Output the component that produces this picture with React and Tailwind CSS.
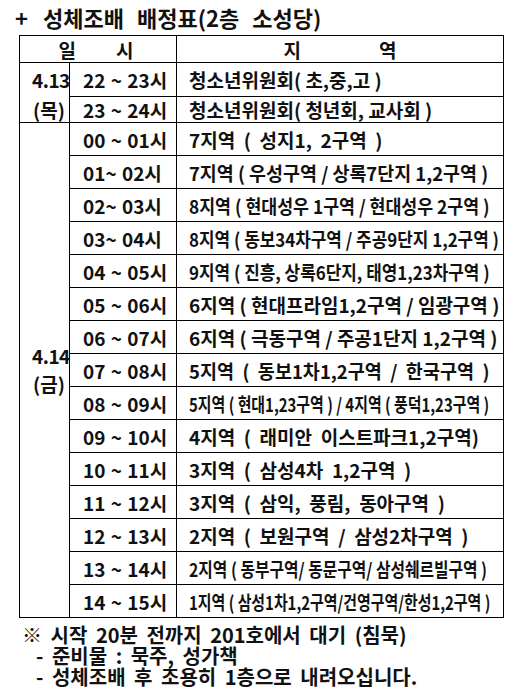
import React from "react";

// rows squeezed horizontally (장평) in the original get a scale-x class
const rows = [
  { time: "00 ~ 01시", area: "7지역  (  성지1,  2구역  )", cls: "" },
  { time: "01~ 02시", area: "7지역 ( 우성구역 / 상록7단지 1,2구역 )", cls: "scale-x-[0.97]" },
  { time: "02~ 03시", area: "8지역 ( 현대성우 1구역 / 현대성우 2구역 )", cls: "scale-x-[0.91]" },
  { time: "03~ 04시", area: "8지역 ( 동보34차구역 / 주공9단지 1,2구역 )", cls: "scale-x-[0.89]" },
  { time: "04 ~ 05시", area: "9지역 ( 진흥, 상록6단지, 태영1,23차구역 )", cls: "scale-x-[0.89]" },
  { time: "05 ~ 06시", area: "6지역 ( 현대프라임1,2구역 / 임광구역 )", cls: "" },
  { time: "06 ~ 07시", area: "6지역 ( 극동구역 / 주공1단지 1,2구역 )", cls: "" },
  { time: "07 ~ 08시", area: "5지역  (  동보1차1,2구역  /  한국구역  )", cls: "scale-x-[0.975]" },
  { time: "08 ~ 09시", area: "5지역 ( 현대1,23구역 ) / 4지역 ( 풍덕1,23구역 )", cls: "scale-x-[0.785]" },
  { time: "09 ~ 10시", area: "4지역  (  래미안  이스트파크1,2구역)", cls: "" },
  { time: "10 ~ 11시", area: "3지역  (  삼성4차  1,2구역  )", cls: "" },
  { time: "11 ~ 12시", area: "3지역  (  삼익,  풍림,  동아구역  )", cls: "" },
  { time: "12 ~ 13시", area: "2지역  (  보원구역  /  삼성2차구역  )", cls: "" },
  { time: "13 ~ 14시", area: "2지역 ( 동부구역/ 동문구역/ 삼성쉐르빌구역 )", cls: "scale-x-[0.83]" },
  { time: "14 ~ 15시", area: "1지역 ( 삼성1차1,2구역/건영구역/한성1,2구역 )", cls: "scale-x-[0.785]" },
];

const cell = "border-[1.5px] border-black";

function Area({ text, cls = "" }) {
  return <span className={`inline-block origin-left whitespace-pre ${cls}`}>{text}</span>;
}

function App() {
  return (
    <div className="min-h-[695px] w-[528px] overflow-hidden bg-white text-[#111] font-['Noto_Sans_CJK_KR',sans-serif] font-bold">
      <h1 className="pl-[15px] pt-[2px] text-[22px] leading-[30px] [word-spacing:8px]">
        <span className="mr-[2px]">+</span> 성체조배 배정표(2층 소성당)
      </h1>
      <div className="pl-[19px] pt-[3px]">
        <table className="border-collapse table-fixed w-[484px] text-[19px]">
          <colgroup>
            <col className="w-[50px]" />
            <col className="w-[107px]" />
            <col className="w-[327px]" />
          </colgroup>
          <thead>
            <tr className="h-[27px]">
              <th colSpan={2} className={`${cell} p-0 font-bold leading-none`}>
                <div className="flex justify-center gap-[40px] pr-[4px]">
                  <span>일</span>
                  <span>시</span>
                </div>
              </th>
              <th className={`${cell} p-0 font-bold leading-none`}>
                <div className="flex justify-center gap-[78px]">
                  <span>지</span>
                  <span>역</span>
                </div>
              </th>
            </tr>
          </thead>
          <tbody className="leading-none">
            <tr className="h-[33px]">
              <td rowSpan={2} className={`${cell} p-0 align-top`}>
                <div className="h-[33px] flex items-center pl-[12px] tracking-[-0.5px]">4.13</div>
                <div className="h-[26px] flex items-center pl-[13px]">(목)</div>
              </td>
              <td className={`${cell} pl-[13px] whitespace-pre [word-spacing:1px]`}>22 ~ 23시</td>
              <td className={`${cell} pl-[12px]`}>
                <Area text="청소년위원회( 초,중,고 )" />
              </td>
            </tr>
            <tr className="h-[26px]">
              <td className={`${cell} pl-[13px] whitespace-pre [word-spacing:1px]`}>23 ~ 24시</td>
              <td className={`${cell} pl-[12px]`}>
                <Area text="청소년위원회( 청년회, 교사회 )" />
              </td>
            </tr>
            {rows.map((r, i) => (
              <tr key={r.time} className="h-[33px]">
                {i === 0 && (
                  <td rowSpan={rows.length} className={`${cell} p-0 pl-[12px] text-left`}>
                    <div className="leading-[28px] tracking-[-0.5px]">4.14</div>
                    <div className="leading-[28px] pl-[1px]">(금)</div>
                  </td>
                )}
                <td className={`${cell} pl-[13px] whitespace-pre [word-spacing:1px]`}>{r.time}</td>
                <td className={`${cell} pl-[12px]`}>
                  <Area text={r.area} cls={r.cls} />
                </td>
              </tr>
            ))}
          </tbody>
        </table>
      </div>
      <div className="pt-[6px] text-[20px] leading-[21px] [word-spacing:4px]">
        <p className="pl-[22px]">※ 시작 20분 전까지 201호에서 대기 (침묵)</p>
        <p className="pl-[36px]">- 준비물 : 묵주, 성가책</p>
        <p className="pl-[36px]">- 성체조배 후 조용히 1층으로 내려오십니다.</p>
      </div>
    </div>
  );
}

export default App;
